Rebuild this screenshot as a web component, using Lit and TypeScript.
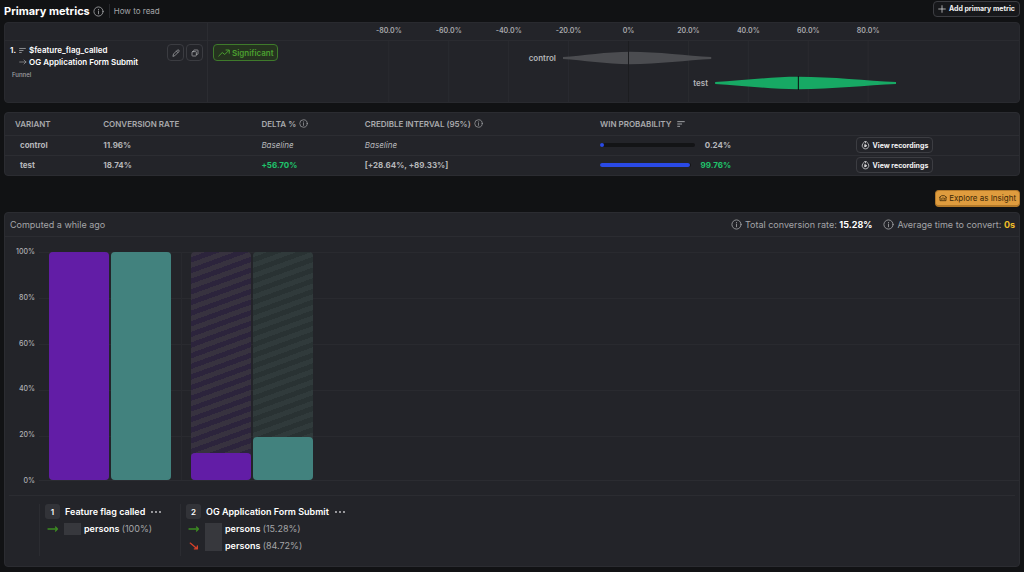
import { LitElement, html, svg, css } from "lit";
import { customElement } from "lit/decorators.js";

const DOMAIN = 115;
const pct = (v: number) => `${((v + DOMAIN) / (2 * DOMAIN)) * 100}%`;
const span = (a: number, b: number) => `${((b - a) / (2 * DOMAIN)) * 100}%`;

const TICKS = [-80, -60, -40, -20, 0, 20, 40, 60, 80];

const VARIANTS = [
  { key: "control", rate: "11.96%", delta: "", interval: "", win: 0.24, from: -21.9, mid: 0.5, to: 27.7, y: 17 },
  { key: "test", rate: "18.74%", delta: "+56.70%", interval: "[+28.64%, +89.33%]", win: 99.76, from: 28.9, mid: 56.7, to: 89.33, y: 42 },
];

const base = css`
  *, *::before, *::after { box-sizing: border-box; }
  button, a { font-family: inherit; color: inherit; text-decoration: none; }
  svg { display: block; flex: none; }
`;

const stroke = (size: number, body: unknown, width = 1.5) => html`<svg
  width=${size} height=${size} viewBox="0 0 24 24" fill="none" stroke="currentColor"
  stroke-width=${width} stroke-linecap="round" stroke-linejoin="round" aria-hidden="true">${body}</svg>`;

const icons = {
  info: (s: number) => stroke(s, svg`<circle cx="12" cy="12" r="10"/><path d="M12 11v6M12 7.500v.5"/>`, 1.8),
  plus: () => stroke(8, svg`<path d="M12 2v20M2 12h20"/>`, 2),
  pencil: () => stroke(8, svg`<path d="M3 21l1.500-6L16 3.500a2.500 2.500 0 0 1 4.500 4.500L9 19.500z M13.500 6.500l4 4"/>`, 2.2),
  copy: () => stroke(8, svg`<rect x="3" y="8" width="13" height="13" rx="2"/><path d="M8 8V4.500A1.500 1.500 0 0 1 9.500 3h10A1.500 1.500 0 0 1 21 4.500v10a1.500 1.500 0 0 1-1.500 1.500H16"/>`, 2.2),
  trend: () => stroke(12, svg`<path d="M1.500 18l7-7 5 4L22 6.500M16 6h6.500v6.500"/>`, 2),
  funnel: (s: number) => stroke(s, svg`<path d="M2 5h20M2 12h12M2 19h6"/>`, 2.8),
  arrow: (s: number, w = 2) => stroke(s, svg`<path d="M2 12h19M15 6l6 6-6 6"/>`, w),
  flow: () => stroke(12, svg`<path d="M2 12h19M17 8l4 4-4 4"/>`, 2.6),
  drop: () => stroke(10, svg`<path d="M3 5l17 14M20 12v7h-7"/>`, 3.2),
  record: () => stroke(9, svg`<path d="M7 4.500a9 9 0 1 0 10 0M9 2h6M12 2v3"/><path d="M10 10v6l5-3z" fill="currentColor"/>`, 1.8),
  insight: () => stroke(8, svg`<path d="M3 10V20h18V10M7 16v-2M12 16v-5M17 16v-3M1.500 10L8 5h8l6.500 5"/>`, 2.4),
};

@customElement("effect-chart")
class EffectChart extends LitElement {
  static styles = [base, css`
    :host { display: block; }
    .panel { border: 1px solid #292a2f; border-radius: 4px; background: #232429; overflow: hidden; }
    .row { display: grid; grid-template-columns: 203px 76px minmax(0, 1fr); }
    .head { border-bottom: 1px solid #2a2b30; height: 18px; }
    .body { height: 61px; }
    .plot { padding-right: 46px; }
    .canvas { width: 100%; height: 100%; overflow: visible; }
    .cell { border-right: 1px solid #2b2c31; }
    .metric { display: flex; justify-content: space-between; align-items: flex-start; padding: 3px 4px 0 5px; }
    .name { display: grid; grid-template-columns: 8px 9px auto; column-gap: 1px; align-items: center; font-size: 8px; font-weight: 600; line-height: 12px; color: #fff; white-space: nowrap; }
    .icon { color: #a4a5a8; }
    .kind { grid-column: 1 / -1; padding-left: 2px; line-height: 14px; font-size: 6px; font-weight: 500; color: #a0a1a4; }
    .tools { display: flex; gap: 2px; }
    .tool { width: 17px; height: 17px; padding: 0; display: grid; place-items: center; color: #aaabae; background: #232429; border: 1px solid #3b3c41; border-radius: 4px; }
    .sig { display: flex; align-items: flex-start; padding: 3px 0 0 5px; }
    .tag { display: flex; align-items: center; gap: 2px; height: 17px; padding: 0 3px 0 4px; border: 1px solid #3f7a2b; border-radius: 4px; background: #25331f; color: #4b9f30; font-size: 8px; font-weight: 600; }
    .tick { font-size: 7px; font-weight: 600; fill: #a9aaad; text-anchor: middle; }
    .series { font-size: 8px; font-weight: 600; fill: #b4b5b8; text-anchor: end; }
    .grid { stroke: #2a2b30; }
    .zero { stroke: #1c1d20; }
    .control { fill: #4b4c50; }
    .test { fill: #17a964; }
    .median { stroke: #0b0c0e; }
  `];
  render() {
    return html`<section class="panel">
      <div class="row head">
        <div class="cell"></div><div></div>
        <div class="plot"><svg class="canvas">${TICKS.map((t) => svg`<text class="tick" x=${pct(t)} y="10">${t === 0 ? "0%" : `${t.toFixed(1)}%`}</text>`)}</svg></div>
      </div>
      <div class="row body">
        <div class="cell metric">
          <div class="name">
            <span>1.</span><span class="icon">${icons.funnel(7)}</span><span>$feature_flag_called</span>
            <span></span><span class="icon">${icons.arrow(8)}</span><span>OG Application Form Submit</span>
            <span class="kind">Funnel</span>
          </div>
          <div class="tools">
            <button class="tool" aria-label="Edit metric">${icons.pencil()}</button>
            <button class="tool" aria-label="Duplicate metric">${icons.copy()}</button>
          </div>
        </div>
        <div class="sig"><span class="tag">${icons.trend()}Significant</span></div>
        <div class="plot"><svg class="canvas">
          ${TICKS.filter((t) => t !== 0).map((t) => svg`<line class="grid" x1=${pct(t)} x2=${pct(t)} y1="0" y2="100%"/>`)}
          ${VARIANTS.map((v) => svg`
            <svg x=${pct(v.from)} y=${v.y - 7} width=${span(v.from, v.to)} height="14" viewBox="0 0 100 14" preserveAspectRatio="none">
              ${this.violin(v.key, ((v.mid - v.from) / (v.to - v.from)) * 100)}
            </svg>
            <text class="series" x=${pct(v.from)} dx="-7" y=${v.y + 3}>${v.key}</text>`)}
          <line class="zero" x1=${pct(0)} x2=${pct(0)} y1="0" y2="100%"/>
          <line class="median" x1=${pct(56.7)} x2=${pct(56.7)} y1="35" y2="49"/>
        </svg></div>
      </div>
    </section>`;
  }
  private violin(key: string, m: number) {
    const l = m * 0.3;
    const l2 = m * 0.65;
    const r = 100 - (100 - m) * 0.3;
    const r2 = 100 - (100 - m) * 0.65;
    return svg`<path class=${key} d="M0 6C${l} 4.800 ${l2} .8 ${m} .8C${r2} .8 ${r} 4.800 100 6V8C${r} 9.200 ${r2} 13.200 ${m} 13.200C${l2} 13.200 ${l} 9.200 0 8Z"/>`;
  }
}

@customElement("variant-table")
class VariantTable extends LitElement {
  static styles = [base, css`
    :host { display: block; }
    .panel { border: 1px solid #2b2c31; border-radius: 4px; background: #232429; overflow: hidden; }
    table { width: 100%; table-layout: fixed; border-collapse: collapse; color: #b6b7ba; }
    .c1 { width: 8.7%; } .c2 { width: 15.6%; } .c3 { width: 10.2%; } .c4 { width: 23.2%; } .c5 { width: 25.2%; }
    th { height: 22px; padding: 0 10px; text-align: left; font-size: 8px; font-weight: 600; white-space: nowrap; color: #a9aaad; }
    td { height: 20px; padding: 0 10px; border-top: 1px solid #2c2d32; font-size: 8px; font-weight: 700; }
    td:first-child { padding-left: 15px; }
    .th { display: flex; align-items: center; gap: 3px; }
    .wide { gap: 6px; }
    .none { font-style: italic; font-weight: 400; }
    .up { color: #1fc46c; font-weight: 700; }
    .win { display: flex; align-items: center; gap: 10px; width: 131px; }
    .track { flex: 1; height: 4px; border-radius: 2px; background: #131416; }
    .fill { display: block; height: 4px; min-width: 4px; border-radius: 2px; background: #2a4ae6; }
    .rec { display: flex; align-items: center; gap: 3px; height: 16px; padding: 0 4px; border: 1px solid #3c3d42; border-radius: 4px; background: #232429; color: #f2f2f3; font-size: 7px; font-weight: 700; white-space: nowrap; }
  `];
  render() {
    return html`<section class="panel"><table>
      <colgroup><col class="c1"><col class="c2"><col class="c3"><col class="c4"><col class="c5"><col></colgroup>
      <thead><tr>
        <th>VARIANT</th><th>CONVERSION RATE</th>
        <th><span class="th">DELTA % ${icons.info(9)}</span></th>
        <th><span class="th">CREDIBLE INTERVAL (95%) ${icons.info(9)}</span></th>
        <th><span class="th wide">WIN PROBABILITY ${icons.funnel(8)}</span></th><th></th>
      </tr></thead>
      <tbody>${VARIANTS.map((v) => html`<tr>
        <td>${v.key}</td><td>${v.rate}</td>
        <td class=${v.delta ? "up" : "none"}>${v.delta || "Baseline"}</td>
        <td class=${v.interval ? "" : "none"}>${v.interval || "Baseline"}</td>
        <td><div class="win"><div class="track"><span class="fill" style="width:${v.win}%"></span></div><span class=${v.delta ? "up" : ""}>${v.win}%</span></div></td>
        <td><button class="rec">${icons.record()}View recordings</button></td>
      </tr>`)}</tbody>
    </table></section>`;
  }
}

const STEPS = [
  { n: 1, name: "Feature flag called", values: [100, 100], rows: ["(100%)"] },
  { n: 2, name: "OG Application Form Submit", values: [11.96, 18.74], rows: ["(15.28%)", "(84.72%)"] },
];

@customElement("funnel-insight")
class FunnelInsight extends LitElement {
  static styles = [base, css`
    :host { display: block; }
    .panel { border: 1px solid #2b2c31; border-radius: 4px; background: #232429; overflow: hidden; }
    .top { display: flex; align-items: center; height: 24px; padding: 0 4px 0 5px; border-bottom: 1px solid #2b2c31; font-size: 9px; color: #a4a5a8; gap: 11px; }
    .grow { flex: 1; }
    .stat { display: flex; align-items: center; gap: 3px; }
    .strong { color: #fff; font-weight: 700; }
    .gold { color: #f0bd28; font-weight: 700; }
    .chart { display: grid; grid-template-columns: 34px minmax(0, 1fr); height: 258px; padding: 15px 0 14px; }
    .axis { display: flex; flex-direction: column; justify-content: space-between; margin: -5px 0; padding-right: 4px; text-align: right; font-size: 7px; line-height: 10px; font-weight: 500; color: #b0b1b4; }
    .area { display: grid; grid-template-columns: 142px 142px; background: repeating-linear-gradient(to bottom, #292a2f 0 1px, transparent 1px 46px); border-bottom: 1px solid #2b2c31; }
    .step { display: flex; gap: 2px; padding-left: 10px; }
    .step + .step { border-left: 1px solid #28292e; padding-left: 9px; }
    .bar { width: 60px; border-radius: 4px; display: flex; align-items: flex-end; }
    .fill { display: block; width: 100%; border-radius: 4px; }
    .a { background: repeating-linear-gradient(160deg, #37323f 0 5px, #2c243c 5px 10px); }
    .b { background: repeating-linear-gradient(160deg, #303a3b 0 5px, #293233 5px 10px); }
    .a .fill { background: #621da6; }
    .b .fill { background: #42827e; }
    .legend { display: flex; margin: 0 4px; padding: 8px 0 10px 30px; border-top: 1px solid #2b2c31; }
    .item { min-width: 141px; height: 52px; padding-left: 5px; border-left: 1px solid #2b2c31; color: #fff; font-size: 9px; font-weight: 600; white-space: nowrap; }
    .title { display: flex; align-items: center; gap: 5px; height: 15px; }
    .num { width: 15px; height: 15px; border-radius: 3px; background: #323338; display: grid; place-items: center; font-size: 8px; }
    .more { padding: 0; border: 0; background: none; color: #d0d0d2; display: flex; }
    .counts { display: grid; grid-template-columns: 16px 17px auto; column-gap: 3px; grid-auto-rows: 17px; align-items: center; padding-top: 1px; }
    .mask { grid-column: 2; grid-row: 1; height: 12px; background: #37383d; }
    .mask.tall { grid-row: 1 / 3; height: 28px; }
    .to { grid-column: 1; color: #3d8a22; display: grid; place-items: center; }
    .off { color: #d4402a; }
    .txt { grid-column: 3; }
    .dim { color: #a4a5a8; font-weight: 400; }
  `];
  render() {
    return html`<section class="panel">
      <header class="top"><span class="grow">Computed a while ago</span>
        <span class="stat">${icons.info(11)}<span>Total conversion rate: <b class="strong">15.28%</b></span></span>
        <span class="stat">${icons.info(11)}<span>Average time to convert: <b class="gold">0s</b></span></span>
      </header>
      <div class="chart">
        <div class="axis">${[100, 80, 60, 40, 20, 0].map((n) => html`<span>${n}%</span>`)}</div>
        <div class="area">${STEPS.map((s) => html`<div class="step">
          ${s.values.map((v, i) => html`<div class="bar ${i ? "b" : "a"}"><span class="fill" style="height:${v}%"></span></div>`)}
        </div>`)}</div>
      </div>
      <footer class="legend">${STEPS.map((s) => html`<div class="item">
        <div class="title"><span class="num">${s.n}</span><span>${s.name}</span>
          <button class="more" aria-label="More options"><svg width="12" height="4" viewBox="0 0 12 4" fill="currentColor"><circle cx="2" cy="2" r=".9"/><circle cx="6" cy="2" r=".9"/><circle cx="10" cy="2" r=".9"/></svg></button></div>
        <div class="counts"><span class="mask ${s.rows.length > 1 ? "tall" : ""}"></span>
          ${s.rows.map((r, i) => html`<span class="to ${i ? "off" : ""}" style="grid-row:${i + 1}">${i ? icons.drop() : icons.flow()}</span>
            <span class="txt" style="grid-row:${i + 1}">persons <span class="dim">${r}</span></span>`)}
        </div>
      </div>`)}</footer>
    </section>`;
  }
}

@customElement("app-root")
class AppRoot extends LitElement {
  static styles = [base, css`
    :host { display: block; box-sizing: border-box; min-height: 100vh; padding: 0 4px 5px; background: #111214; color: #b6b7ba; font-family: Inter, "Liberation Sans", sans-serif; }
    .bar { display: flex; align-items: center; height: 22px; }
    h1 { margin: 0; font-size: 11px; font-weight: 700; color: #fff; }
    .info { margin-left: 3px; color: #a4a5a8; }
    .how { margin-left: 5px; padding-left: 4px; border-left: 1px solid #26272b; font-size: 8px; line-height: 14px; color: #a4a5a8; }
    .add { display: flex; align-items: center; gap: 3px; margin: 0 0 5px auto; height: 16px; padding: 0 4px; border: 1px solid #3c3d42; border-radius: 4px; background: #17181b; color: #f2f2f3; font-size: 7px; font-weight: 700; }
    .table { margin-top: 9px; }
    .actions { display: flex; justify-content: flex-end; padding: 14px 0 5px; }
    .explore { display: flex; align-items: center; gap: 2px; height: 17px; padding: 0 3px; border: 1px solid #b3792a; border-bottom-width: 2px; border-radius: 4px; background: #df9c3e; color: #3d2808; font-size: 8px; }
  `];
  render() {
    return html`
      <header class="bar"><h1>Primary metrics</h1><span class="info">${icons.info(11)}</span>
        <a class="how" href="#how-to-read">How to read</a>
        <button class="add">${icons.plus()}Add primary metric</button></header>
      <effect-chart></effect-chart>
      <variant-table class="table"></variant-table>
      <div class="actions"><button class="explore">${icons.insight()}Explore as Insight</button></div>
      <funnel-insight></funnel-insight>`;
  }
}
